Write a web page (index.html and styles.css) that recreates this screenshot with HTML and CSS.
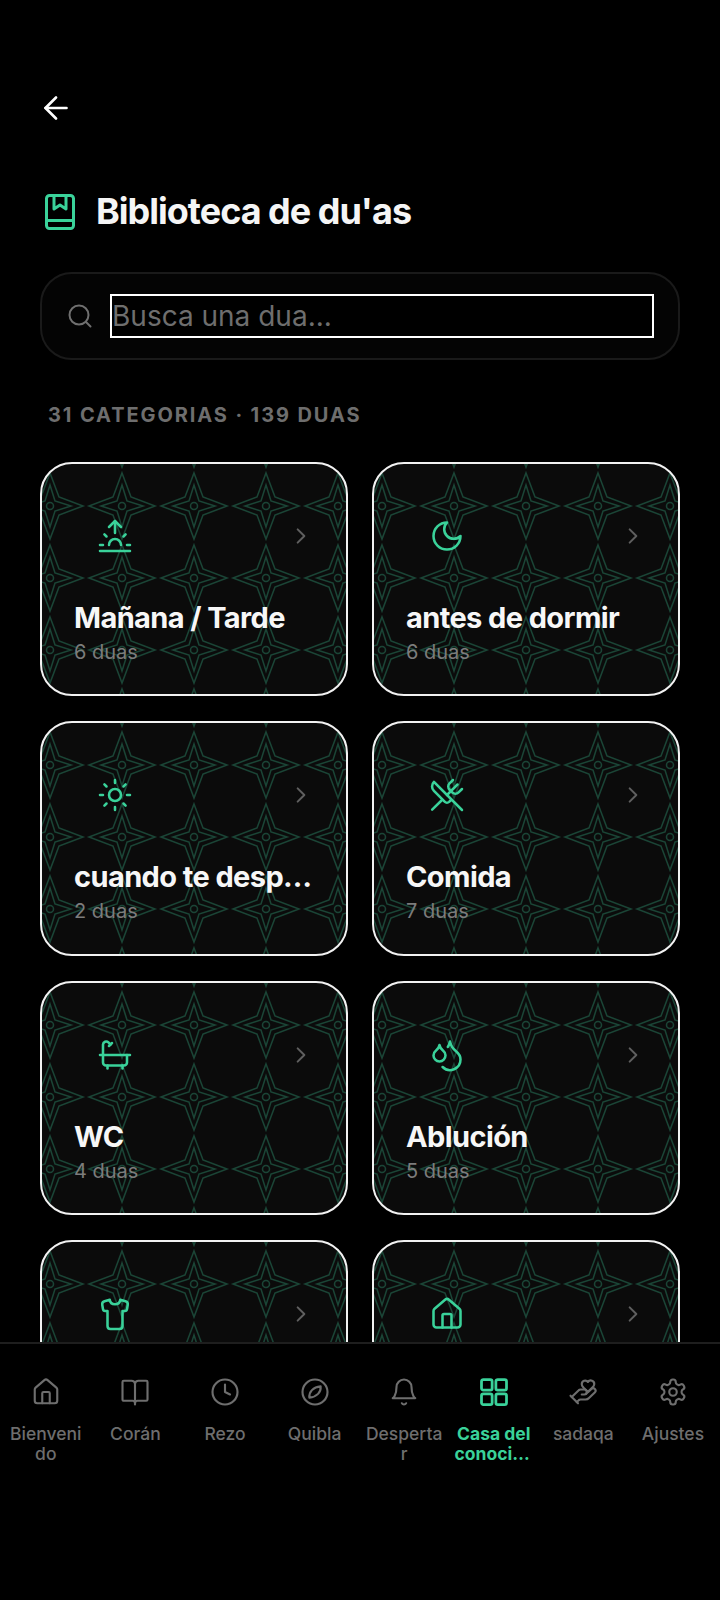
FILE: index.html
```html
<!DOCTYPE html>
<html lang="es">
<head>
<meta charset="utf-8">
<title>Biblioteca de du'as</title>
<link rel="stylesheet" href="styles.css">
</head>
<body>
<div class="app">
  <main class="content">
    <button class="back" aria-label="Volver">
      <svg class="back-icon" viewBox="0 0 24 24"><path d="M23 12H2"/><path d="M12.5 1.5 2 12l10.500 10.500"/></svg>
    </button>
    <header class="page-head">
      <svg class="book-icon" viewBox="0 0 30 36"><rect x="1.500" y="1.500" width="27" height="33" rx="3"/><path d="M1.500 26.500h27"/><path d="M9 1.500V15l6-4 6 4V1.500"/></svg>
      <h1 class="page-title">Biblioteca de du'as</h1>
    </header>
    <div class="search">
      <svg class="search-icon" viewBox="0 0 24 24"><circle cx="11" cy="11" r="9.500"/><path d="m18 18 4.500 4.500"/></svg>
      <input class="search-input" type="text" placeholder="Busca una dua...">
    </div>
    <p class="count">31 CATEGORIAS · 139 DUAS</p>
    <section class="grid">
      <article class="card">
        <div class="card-head">
          <span class="card-icon"><svg viewBox="0 0 24 24"><path d="M12 2v8"/><path d="m4.930 10.930 1.410 1.410"/><path d="M2 18h2"/><path d="M20 18h2"/><path d="m19.070 10.930-1.410 1.410"/><path d="M22 22H2"/><path d="m8 6 4-4 4 4"/><path d="M16 18a4 4 0 0 0-8 0"/></svg></span>
          <svg class="chevron" viewBox="0 0 24 24"><path d="m8 4 8 8-8 8"/></svg>
        </div>
        <h2 class="card-title">Mañana / Tarde</h2>
        <p class="card-sub">6 duas</p>
      </article>
      <article class="card">
        <div class="card-head">
          <span class="card-icon"><svg viewBox="0 0 24 24"><path d="M12 3a6 6 0 0 0 9 9 9 9 0 1 1-9-9Z"/></svg></span>
          <svg class="chevron" viewBox="0 0 24 24"><path d="m8 4 8 8-8 8"/></svg>
        </div>
        <h2 class="card-title">antes de dormir</h2>
        <p class="card-sub">6 duas</p>
      </article>
      <article class="card">
        <div class="card-head">
          <span class="card-icon"><svg viewBox="0 0 24 24"><circle cx="12" cy="12" r="4"/><path d="M12 2v2"/><path d="M12 20v2"/><path d="m4.930 4.930 1.410 1.410"/><path d="m17.660 17.660 1.410 1.410"/><path d="M2 12h2"/><path d="M20 12h2"/><path d="m6.340 17.660-1.410 1.410"/><path d="m19.070 4.930-1.410 1.410"/></svg></span>
          <svg class="chevron" viewBox="0 0 24 24"><path d="m8 4 8 8-8 8"/></svg>
        </div>
        <h2 class="card-title">cuando te despiertas</h2>
        <p class="card-sub">2 duas</p>
      </article>
      <article class="card">
        <div class="card-head">
          <span class="card-icon"><svg viewBox="0 0 24 24"><path d="m16 2-2.300 2.300a3 3 0 0 0 0 4.200l1.800 1.800a3 3 0 0 0 4.200 0L22 8"/><path d="M15 15 3.300 3.300a4.200 4.200 0 0 0 0 6l7.300 7.300c.7.7 2 .7 2.800 0L15 15Zm0 0 7 7"/><path d="m2.100 21.800 6.400-6.300"/><path d="m19 5-7 7"/></svg></span>
          <svg class="chevron" viewBox="0 0 24 24"><path d="m8 4 8 8-8 8"/></svg>
        </div>
        <h2 class="card-title">Comida</h2>
        <p class="card-sub">7 duas</p>
      </article>
      <article class="card">
        <div class="card-head">
          <span class="card-icon"><svg viewBox="0 0 24 24"><path d="M10 4 8 6"/><path d="M17 19v2"/><path d="M2 12h20"/><path d="M7 19v2"/><path d="M9 5 7.621 3.621A2.121 2.121 0 0 0 4 5v12a2 2 0 0 0 2 2h12a2 2 0 0 0 2-2v-5"/></svg></span>
          <svg class="chevron" viewBox="0 0 24 24"><path d="m8 4 8 8-8 8"/></svg>
        </div>
        <h2 class="card-title">WC</h2>
        <p class="card-sub">4 duas</p>
      </article>
      <article class="card">
        <div class="card-head">
          <span class="card-icon"><svg viewBox="0 0 24 24"><path d="M7 16.300c2.200 0 4-1.830 4-4.050 0-1.160-.57-2.260-1.710-3.190S7.290 6.750 7 5.300c-.29 1.450-1.140 2.840-2.290 3.760S3 11.100 3 12.250c0 2.220 1.800 4.050 4 4.050z"/><path d="M12.560 6.600A10.970 10.970 0 0 0 14 3.020c.5 2.500 2 4.900 4 6.500s3 3.500 3 5.500a6.980 6.980 0 0 1-11.910 4.970"/></svg></span>
          <svg class="chevron" viewBox="0 0 24 24"><path d="m8 4 8 8-8 8"/></svg>
        </div>
        <h2 class="card-title">Ablución</h2>
        <p class="card-sub">5 duas</p>
      </article>
      <article class="card">
        <div class="card-head">
          <span class="card-icon"><svg viewBox="0 0 24 24"><path d="M15.500 2.500c-.2 2-1.500 3-3.500 3s-3.300-1-3.500-3L5 3.500C3.800 3.900 3.300 4.600 3.500 5.800l.5 3c.1.8.7 1.200 1.400 1.200H7v10c0 1.200.8 2 2 2h6c1.200 0 2-.8 2-2V10h1.600c.7 0 1.300-.4 1.400-1.200l.5-3c.2-1.200-.3-1.900-1.500-2.300z"/></svg></span>
          <svg class="chevron" viewBox="0 0 24 24"><path d="m8 4 8 8-8 8"/></svg>
        </div>
      </article>
      <article class="card">
        <div class="card-head">
          <span class="card-icon"><svg viewBox="0 0 24 24"><path d="M15 21v-8a1 1 0 0 0-1-1h-4a1 1 0 0 0-1 1v8"/><path d="M3 10a2 2 0 0 1 .709-1.528l7-5.999a2 2 0 0 1 2.582 0l7 5.999A2 2 0 0 1 21 10v9a2 2 0 0 1-2 2H5a2 2 0 0 1-2-2z"/></svg></span>
          <svg class="chevron" viewBox="0 0 24 24"><path d="m8 4 8 8-8 8"/></svg>
        </div>
      </article>
    </section>
  </main>
  <nav class="tabbar">
    <a class="tab">
      <svg class="tab-icon" viewBox="0 0 24 24"><path d="M15 21v-8a1 1 0 0 0-1-1h-4a1 1 0 0 0-1 1v8"/><path d="M3 10a2 2 0 0 1 .709-1.528l7-5.999a2 2 0 0 1 2.582 0l7 5.999A2 2 0 0 1 21 10v9a2 2 0 0 1-2 2H5a2 2 0 0 1-2-2z"/></svg>
      <span class="tab-label">Bienvenido</span>
    </a>
    <a class="tab">
      <svg class="tab-icon" viewBox="0 0 24 24"><path d="M12 5v17"/><path d="M3 19a1 1 0 0 1-1-1V4a1 1 0 0 1 1-1h6a3 3 0 0 1 3 2 3 3 0 0 1 3-2h6a1 1 0 0 1 1 1v14a1 1 0 0 1-1 1h-7a2 2 0 0 0-2 2 2 2 0 0 0-2-2z"/></svg>
      <span class="tab-label">Corán</span>
    </a>
    <a class="tab">
      <svg class="tab-icon" viewBox="0 0 24 24"><circle cx="12" cy="12" r="10"/><path d="M12 6v6l4 2"/></svg>
      <span class="tab-label">Rezo</span>
    </a>
    <a class="tab">
      <svg class="tab-icon" viewBox="0 0 24 24"><circle cx="12" cy="12" r="10"/><path d="M16.500 7.500c.5 4.500-3 8.500-9 9-.5-4.500 3-8.500 9-9z"/></svg>
      <span class="tab-label">Quibla</span>
    </a>
    <a class="tab">
      <svg class="tab-icon" viewBox="0 0 24 24"><path d="M6 8a6 6 0 0 1 12 0c0 7 3 9 3 9H3s3-2 3-9"/><path d="M10.300 21a1.940 1.940 0 0 0 3.400 0"/></svg>
      <span class="tab-label">Despertar</span>
    </a>
    <a class="tab tab-active">
      <svg class="tab-icon" viewBox="0 0 24 24"><rect x="2" y="2" width="8.500" height="8.500" rx="1.500"/><rect x="13.500" y="2" width="8.500" height="8.500" rx="1.500"/><rect x="2" y="13.500" width="8.500" height="8.500" rx="1.500"/><rect x="13.500" y="13.500" width="8.500" height="8.500" rx="1.500"/></svg>
      <span class="tab-label">Casa del conocimiento</span>
    </a>
    <a class="tab">
      <svg class="tab-icon" viewBox="0 0 24 24"><path d="M11 14h2a2 2 0 1 0 0-4h-3c-.6 0-1.100.2-1.400.6L3 16"/><path d="m7 20 1.600-1.400c.3-.4.8-.6 1.400-.6h4c1.100 0 2.100-.4 2.800-1.200l4.600-4.400a2 2 0 0 0-2.750-2.910l-4.200 3.900"/><path d="m2 15 6 6"/><path d="M19.500 8.500c.7-.7 1.500-1.600 1.500-2.700A2.730 2.730 0 0 0 16 4a2.780 2.780 0 0 0-5 1.800c0 1.200.8 2 1.500 2.800L16 12Z"/></svg>
      <span class="tab-label">sadaqa</span>
    </a>
    <a class="tab">
      <svg class="tab-icon" viewBox="0 0 24 24"><path d="M12.220 2h-.44a2 2 0 0 0-2 2v.18a2 2 0 0 1-1 1.730l-.43.25a2 2 0 0 1-2 0l-.15-.08a2 2 0 0 0-2.730.73l-.22.38a2 2 0 0 0 .73 2.730l.15.1a2 2 0 0 1 1 1.720v.51a2 2 0 0 1-1 1.740l-.15.09a2 2 0 0 0-.73 2.730l.22.38a2 2 0 0 0 2.730.73l.15-.08a2 2 0 0 1 2 0l.43.25a2 2 0 0 1 1 1.730V20a2 2 0 0 0 2 2h.44a2 2 0 0 0 2-2v-.18a2 2 0 0 1 1-1.730l.43-.25a2 2 0 0 1 2 0l.15.08a2 2 0 0 0 2.730-.73l.22-.39a2 2 0 0 0-.73-2.730l-.15-.08a2 2 0 0 1-1-1.740v-.5a2 2 0 0 1 1-1.740l.15-.09a2 2 0 0 0 .73-2.730l-.22-.38a2 2 0 0 0-2.730-.73l-.15.08a2 2 0 0 1-2 0l-.43-.25a2 2 0 0 1-1-1.730V4a2 2 0 0 0-2-2z"/><circle cx="12" cy="12" r="3"/></svg>
      <span class="tab-label">Ajustes</span>
    </a>
  </nav>
</div>
</body>
</html>
```
FILE: styles.css
```css
* { box-sizing: border-box; }

html, body {
  margin: 0;
  height: 100%;
  background: #000;
}

body {
  font-family: Inter, "Liberation Sans", sans-serif;
  color: #fff;
}

svg {
  display: block;
  fill: none;
  stroke-linecap: round;
  stroke-linejoin: round;
}

.app {
  height: 1600px;
  display: flex;
  flex-direction: column;
  overflow: hidden;
}

.content {
  flex: 1;
  min-height: 0;
  overflow: hidden;
  padding: 96px 40px 0;
}

.back {
  display: block;
  padding: 0;
  margin: 0 0 0 3px;
  background: none;
  border: 0;
}

.back-icon {
  width: 25px;
  height: 24px;
  stroke: #fff;
  stroke-width: 2.600;
}

.page-head {
  display: flex;
  align-items: flex-start;
  gap: 21px;
  margin: 74px 0 0 5px;
}

.book-icon {
  width: 30px;
  height: 36px;
  flex: none;
  stroke: #3ad29a;
  stroke-width: 3;
}

.page-title {
  margin: -1px 0 1px;
  font-size: 36px;
  line-height: 36px;
  font-weight: 700;
  letter-spacing: -1px;
  color: #f5f5f5;
}

.search {
  display: flex;
  align-items: center;
  gap: 18px;
  height: 88px;
  margin-top: 42px;
  padding: 0 24px 0 26px;
  background: #040404;
  border: 2px solid #1a1a1a;
  border-radius: 32px;
}

.search-icon {
  width: 24px;
  height: 24px;
  flex: none;
  stroke: #707070;
  stroke-width: 2;
}

.search-input {
  flex: 1;
  min-width: 0;
  height: 44px;
  padding: 0;
  background: #000;
  border: 2px solid #fff;
  border-radius: 0;
  outline: 0;
  font-family: Inter, "Liberation Sans", sans-serif;
  font-size: 28px;
  color: #fff;
}

.search-input::placeholder {
  color: #6e6e6e;
  opacity: 1;
}

.count {
  margin: 43px 0 0 8px;
  font-size: 20px;
  line-height: 24px;
  font-weight: 700;
  letter-spacing: 1.900px;
  color: #6e6e6e;
}

.grid {
  display: grid;
  grid-template-columns: repeat(2, minmax(0, 1fr));
  gap: 25px 24px;
  margin-top: 35px;
}

.card {
  height: 234.400px;
  padding: 55px 28px 0 32px;
  border: 2px solid #f2f2f2;
  border-radius: 32px;
  background-color: #0b0b0b;
  background-image: url("data:image/svg+xml,%3Csvg xmlns='http://www.w3.org/2000/svg' width='72' height='72' viewBox='0 0 72 72' fill='none' stroke='%231a4536' stroke-width='1.500' stroke-linejoin='miter'%3E%3Cpath d='M36 3 45 27 69 36 45 45 36 69 27 45 3 36 27 27Z'/%3E%3Cpath d='M36 15 41 31 57 36 41 41 36 57 31 41 15 36 31 31Z'/%3E%3Ccircle cx='36' cy='36' r='3.500'/%3E%3C/svg%3E");
  background-size: 72px 72px;
  background-position: -28.300px 6px;
}

.card-head {
  display: flex;
  align-items: center;
  justify-content: space-between;
  height: 34px;
}

.card-icon {
  display: flex;
  justify-content: center;
  width: 82px;
}

.card-icon svg {
  width: 36px;
  height: 36px;
  stroke: #3ad29a;
  stroke-width: 1.700;
}

.chevron {
  width: 20px;
  height: 20px;
  margin-right: 7px;
  stroke: #5f5f5f;
  stroke-width: 2.400;
}

.card-title {
  margin: 48px 0 0;
  font-size: 29px;
  line-height: 34px;
  font-weight: 700;
  letter-spacing: -.6px;
  color: #f7f7f7;
  white-space: nowrap;
  overflow: hidden;
  text-overflow: ellipsis;
}

.card-sub {
  margin: 3px 0 0;
  font-size: 20px;
  line-height: 28px;
  color: #7c7c7c;
}

.tabbar {
  flex: none;
  height: 258px;
  display: grid;
  grid-template-columns: repeat(8, 89.600px);
  align-items: start;
  padding-top: 33px;
  background: #000;
  border-top: 2px solid #1e1e1e;
}

.tab {
  display: flex;
  flex-direction: column;
  align-items: center;
  gap: 17px;
  padding-left: 2px;
  color: #6e6e6e;
}

.tab-icon {
  width: 30px;
  height: 30px;
  stroke: currentColor;
  stroke-width: 1.700;
}

.tab-label {
  display: -webkit-box;
  -webkit-box-orient: vertical;
  -webkit-line-clamp: 2;
  width: 80px;
  flex: none;
  overflow: hidden;
  overflow-wrap: anywhere;
  font-size: 17.500px;
  line-height: 20px;
  font-weight: 500;
  text-align: center;
}

.tab-active {
  color: #3ad29a;
}

.tab-active .tab-icon {
  stroke-width: 2.200;
}

.tab-active .tab-label {
  font-weight: 700;
}
```
